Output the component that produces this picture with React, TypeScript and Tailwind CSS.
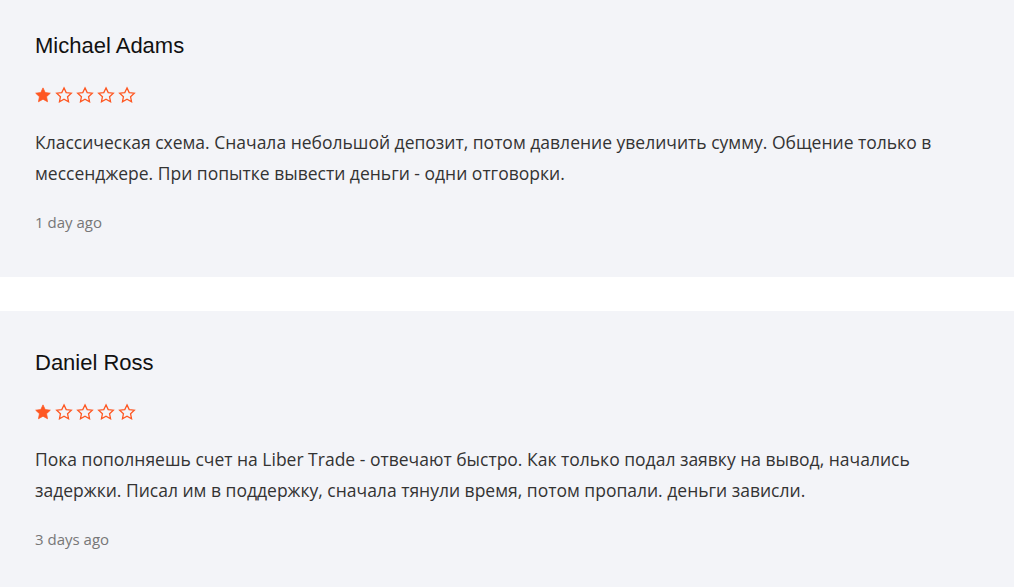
import React from "react";

const STAR = "M12 2.5l2.94 6.26 6.81.82-5.03 4.67 1.33 6.75L12 17.6 5.95 21l1.33-6.75L2.25 9.58l6.81-.82z";

function Stars({ n }: { n: number }) {
  return (
    <div className="flex gap-[3px]">
      {[0, 1, 2, 3, 4].map((i) => (
        <svg key={i} width="18" height="18" viewBox="0 0 24 24">
          <path
            d={STAR}
            fill={i < n ? "#fe5722" : "none"}
            stroke="#fe5722"
            strokeWidth={i < n ? 1 : 1.7}
            strokeLinejoin="miter"
          />
        </svg>
      ))}
    </div>
  );
}

function Review({ name, text, date }: { name: string; text: string; date: string }) {
  return (
    <div className="bg-[#f3f4f8] pl-[35px] pr-[60px] pt-[40px] pb-[45px]">
      <div className="text-[22px] leading-[24px] text-[#111] font-['Liberation_Sans',Arial,sans-serif]">{name}</div>
      <div className="mt-[28px] -ml-[1px]">
        <Stars n={1} />
      </div>
      <p className="mt-[23px] text-[17.5px] leading-[31px] text-[#333] font-['Open_Sans',sans-serif]">{text}</p>
      <div className="mt-[23px] text-[15px] leading-[20px] text-[#777] font-['Open_Sans',sans-serif]">{date}</div>
    </div>
  );
}

export default function App() {
  return (
    <div className="w-[1014px] h-[587px] overflow-hidden bg-white">
      <div className="-mt-[6px] flex flex-col gap-[34px]">
        <Review
          name="Michael Adams"
          text="Классическая схема. Сначала небольшой депозит, потом давление увеличить сумму. Общение только в мессенджере. При попытке вывести деньги - одни отговорки."
          date="1 day ago"
        />
        <Review
          name="Daniel Ross"
          text="Пока пополняешь счет на Liber Trade - отвечают быстро. Как только подал заявку на вывод, начались задержки. Писал им в поддержку, сначала тянули время, потом пропали. деньги зависли."
          date="3 days ago"
        />
      </div>
    </div>
  );
}
